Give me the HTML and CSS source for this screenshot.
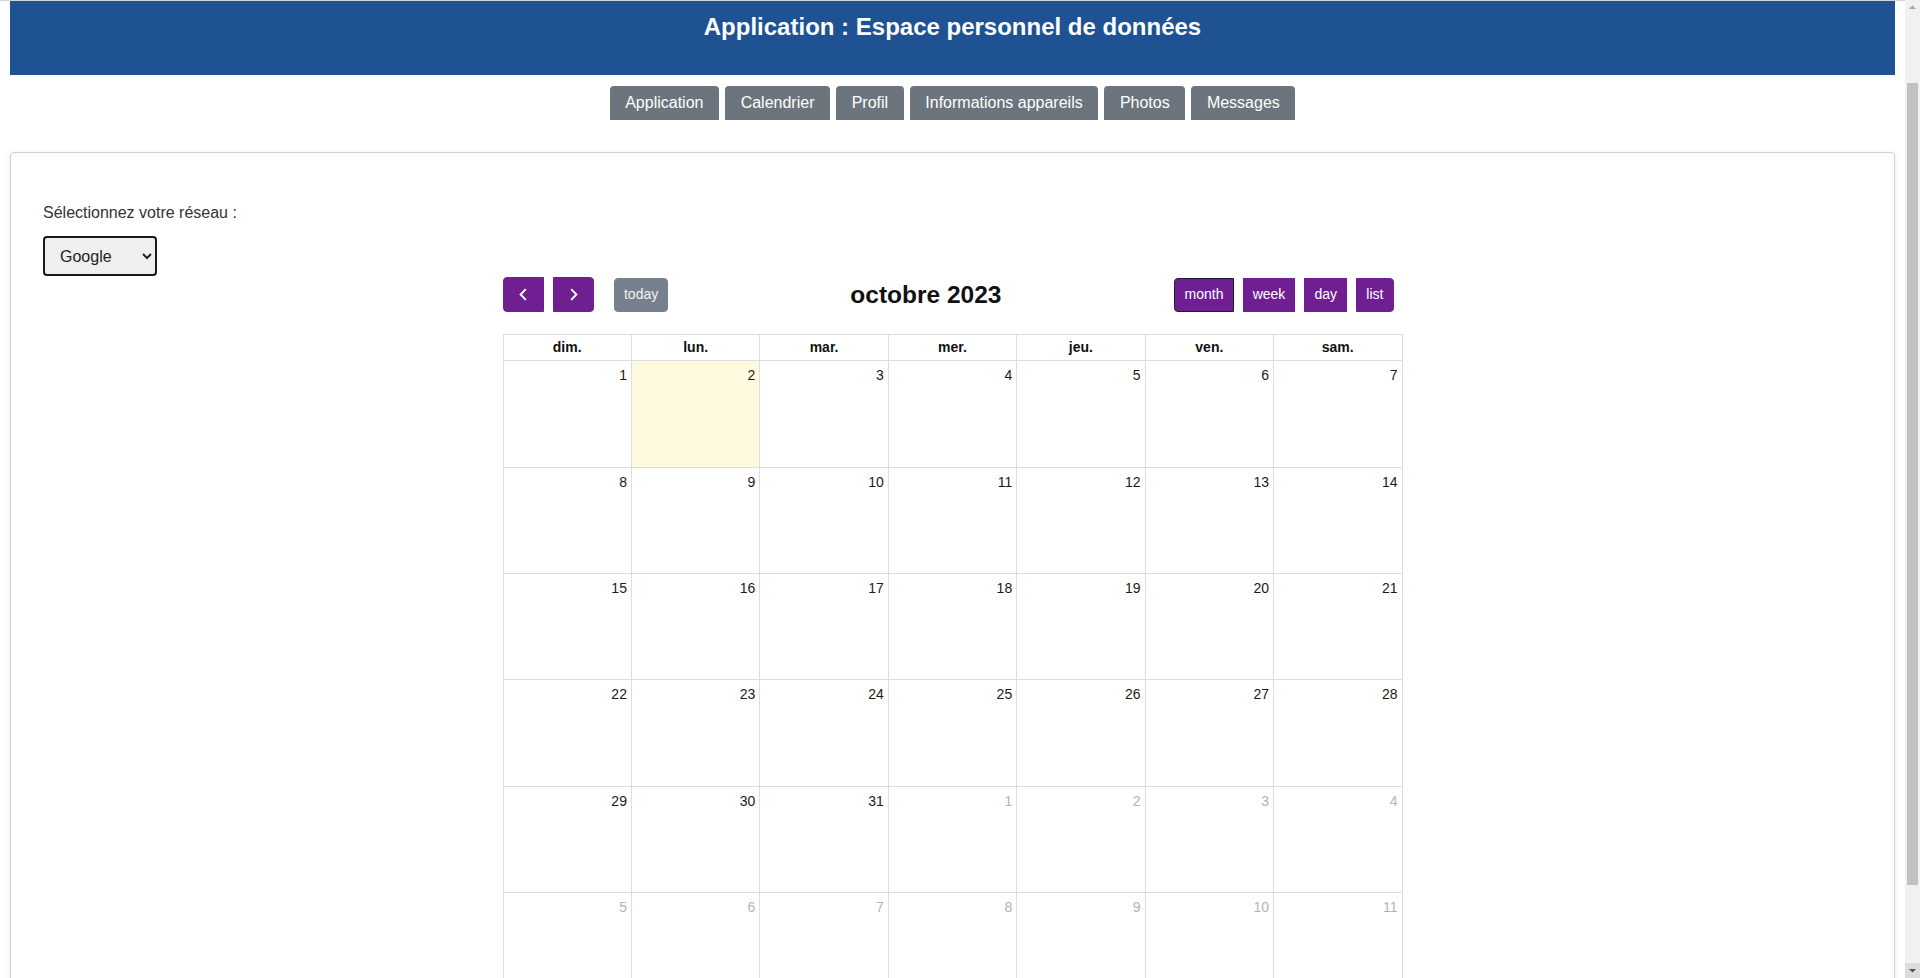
FILE: index.html
```html
<!DOCTYPE html>
<html lang="fr">
<head>
<meta charset="utf-8">
<title>Application : Espace personnel de données</title>
<link rel="stylesheet" href="styles.css">
</head>
<body>
<header class="app-header">
  <h1 class="app-title">Application : Espace personnel de données</h1>
</header>
<nav class="tabs">
  <a class="tab" href="#">Application</a>
  <a class="tab" href="#">Calendrier</a>
  <a class="tab" href="#">Profil</a>
  <a class="tab" href="#">Informations appareils</a>
  <a class="tab" href="#">Photos</a>
  <a class="tab" href="#">Messages</a>
</nav>
<main class="card">
  <label class="net-label" for="net">Sélectionnez votre réseau :</label>
  <select id="net" class="net-select">
    <option>Google</option>
    <option>Facebook</option>
  </select>
  <div class="fc">
    <div class="fc-toolbar">
      <div class="fc-chunk">
        <div class="fc-group">
          <button class="fc-btn fc-btn-icon" aria-label="prev"><svg width="21" height="21" viewBox="0 0 21 21"><path d="M12.8 5.2 L7.6 10.5 L12.8 15.8" fill="none" stroke="#fff" stroke-width="1.9"/></svg></button>
          <button class="fc-btn fc-btn-icon" aria-label="next"><svg width="21" height="21" viewBox="0 0 21 21"><path d="M8.2 5.2 L13.4 10.5 L8.2 15.8" fill="none" stroke="#fff" stroke-width="1.9"/></svg></button>
        </div>
        <button class="fc-btn fc-today" disabled>today</button>
      </div>
      <h2 class="fc-title">octobre 2023</h2>
      <div class="fc-chunk">
        <div class="fc-group">
          <button class="fc-btn fc-active">month</button>
          <button class="fc-btn">week</button>
          <button class="fc-btn">day</button>
          <button class="fc-btn">list</button>
        </div>
      </div>
    </div>
    <table class="fc-grid">
      <thead>
        <tr><th>dim.</th><th>lun.</th><th>mar.</th><th>mer.</th><th>jeu.</th><th>ven.</th><th>sam.</th></tr>
      </thead>
      <tbody>
        <tr><td>1</td><td class="is-today">2</td><td>3</td><td>4</td><td>5</td><td>6</td><td>7</td></tr>
        <tr><td>8</td><td>9</td><td>10</td><td>11</td><td>12</td><td>13</td><td>14</td></tr>
        <tr><td>15</td><td>16</td><td>17</td><td>18</td><td>19</td><td>20</td><td>21</td></tr>
        <tr><td>22</td><td>23</td><td>24</td><td>25</td><td>26</td><td>27</td><td>28</td></tr>
        <tr><td>29</td><td>30</td><td>31</td><td class="is-other">1</td><td class="is-other">2</td><td class="is-other">3</td><td class="is-other">4</td></tr>
        <tr><td class="is-other">5</td><td class="is-other">6</td><td class="is-other">7</td><td class="is-other">8</td><td class="is-other">9</td><td class="is-other">10</td><td class="is-other">11</td></tr>
      </tbody>
    </table>
  </div>
</main>
<div class="scrollbar" aria-hidden="true">
  <div class="sb-arrow sb-up"><svg width="15" height="15" viewBox="0 0 15 15"><path d="M4 9 L7.5 5.5 L11 9 Z" fill="#a3a3a3"/></svg></div>
  <div class="sb-track"><div class="sb-thumb"></div></div>
  <div class="sb-arrow sb-down"><svg width="15" height="15" viewBox="0 0 15 15"><path d="M4 6 L7.5 9.5 L11 6 Z" fill="#505050"/></svg></div>
</div>
</body>
</html>
```
FILE: styles.css
```css
html {
  border-top: 1px solid #d4d4d4;
}
body {
  margin: 0;
  padding: 0 25px 13px 10px;
  font-family: "Liberation Sans", Arial, sans-serif;
  color: #333;
  background: #fff;
}
.app-header {
  background: #1e5293;
  height: 74px;
  box-sizing: border-box;
  padding-top: 12px;
}
.app-title {
  margin: 0;
  text-align: center;
  color: #fff;
  font-size: 24px;
  font-weight: bold;
  line-height: 28px;
}
.tabs {
  display: flex;
  justify-content: center;
  gap: 6px;
  margin-top: 11px;
}
.tab {
  display: block;
  background: #6c757d;
  color: #fff;
  text-decoration: none;
  font-size: 16px;
  line-height: 18px;
  padding: 8px 15.6px;
  border-radius: 4px 4px 0 0;
}
.card {
  margin-top: 32px;
  border: 1px solid #cfcfcf;
  border-radius: 4px;
  box-shadow: 0 1px 6px rgba(0,0,0,0.08);
  padding: 48px 32px 137px;
}
.net-label {
  display: block;
  font-size: 16px;
  line-height: 24px;
  color: #333;
  margin-bottom: 11px;
}
.net-select {
  display: block;
  width: 114px;
  height: 40px;
  font-family: "Liberation Sans", Arial, sans-serif;
  font-size: 16px;
  color: #222;
  background: #efefef;
  border: 2px solid #1a1a1a;
  border-radius: 4px;
  padding: 0 8px 0 11px;
}
.fc {
  width: 900px;
  margin: 1px auto 0;
  font-size: 14px;
  line-height: 1.5;
  color: #222;
}
.fc-toolbar {
  display: flex;
  justify-content: space-between;
  align-items: center;
  margin-bottom: 22px;
}
.fc-chunk {
  display: flex;
  align-items: center;
}
.fc-group {
  display: flex;
}
.fc-btn {
  font-family: "Liberation Sans", Arial, sans-serif;
  font-size: 14px;
  line-height: 21px;
  padding: 5.6px 9.1px;
  margin-right: 9px;
  border: 1px solid #701f93;
  background: #701f93;
  color: #fff;
  border-radius: 0;
  cursor: pointer;
}
.fc-group .fc-btn:first-child {
  border-top-left-radius: 4px;
  border-bottom-left-radius: 4px;
}
.fc-group .fc-btn:last-child {
  border-top-right-radius: 4px;
  border-bottom-right-radius: 4px;
}
.fc-btn-icon {
  padding: 5.6px 9.1px 6.6px;
  display: flex;
  align-items: center;
}
.fc-btn-icon svg {
  display: block;
}
.fc-today {
  margin-left: 11px;
  background: #76818d;
  border-color: #76818d;
  border-radius: 4px;
  color: #f2f2f2;
  cursor: default;
}
.fc-active {
  border-color: #1d1d2b;
}
.fc-title {
  margin: 0;
  font-size: 24.5px;
  font-weight: bold;
  line-height: 1.2;
  color: #111;
}
.fc-grid {
  width: 900px;
  border-collapse: collapse;
  table-layout: fixed;
}
.fc-grid th,
.fc-grid td {
  border: 1px solid #ddd;
}
.fc-grid th {
  font-weight: bold;
  text-align: center;
  padding: 2px 4px;
  height: 21px;
  color: #111;
}
.fc-grid td {
  height: 106.4px;
  box-sizing: border-box;
  vertical-align: top;
  text-align: right;
  padding: 4px;
  color: #1a1a1a;
}
.fc-grid td.is-today {
  background: rgba(255, 220, 40, 0.15);
}
.fc-grid td.is-other {
  color: #b3b3b3;
}
.scrollbar {
  position: fixed;
  top: 0;
  right: 0;
  bottom: 0;
  width: 15px;
  background: #f1f1f1;
  display: flex;
  flex-direction: column;
}
.sb-arrow {
  height: 15px;
  flex: none;
}
.sb-arrow svg {
  display: block;
}
.sb-down {
  background: #dcdcdc;
}
.sb-track {
  flex: 1;
  padding: 68px 2px 78px;
  display: flex;
}
.sb-thumb {
  flex: 1;
  background: #c1c1c1;
}
```
